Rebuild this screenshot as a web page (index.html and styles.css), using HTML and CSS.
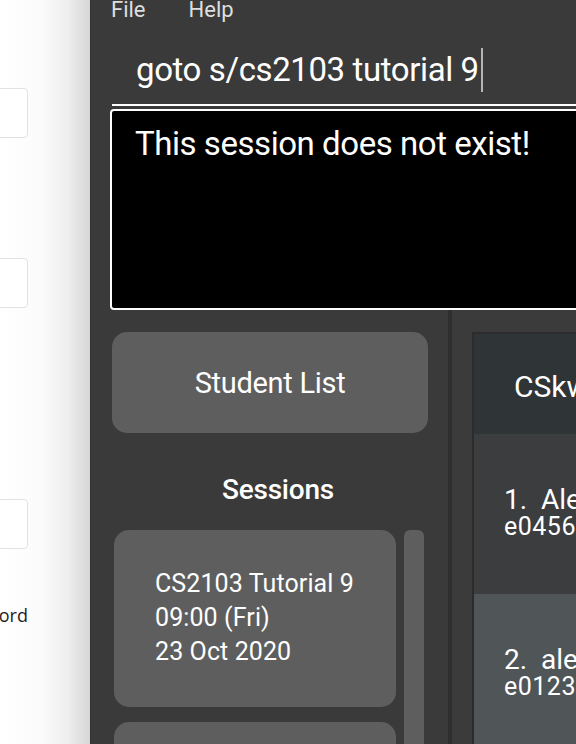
FILE: index.html
```html
<!DOCTYPE html>
<html lang="en">
<head>
<meta charset="utf-8">
<title>CSkwed</title>
<link rel="stylesheet" href="styles.css">
</head>
<body>
<div class="screen">
  <aside class="backdrop">
    <div class="field-col">
      <div class="field-row row-a"><div class="field"></div></div>
      <div class="field-row row-b"><div class="field"></div></div>
      <div class="field-row row-c"><div class="field"></div></div>
      <div class="field-row row-d"><span class="label">Password</span></div>
    </div>
  </aside>
  <main class="app">
    <nav class="menubar">
      <span class="menu-item">File</span>
      <span class="menu-item">Help</span>
    </nav>
    <div class="command">
      <span class="command-text">goto s/cs2103 tutorial 9</span><span class="caret"></span>
    </div>
    <div class="result">This session does not exist!</div>
    <div class="lower">
      <section class="left-pane">
        <button class="student-btn">Student List</button>
        <h2 class="sessions-title">Sessions</h2>
        <div class="session-area">
          <div class="session-list">
            <div class="session-card">
              <div>CS2103 Tutorial 9</div>
              <div>09:00 (Fri)</div>
              <div>23 Oct 2020</div>
            </div>
            <div class="session-card"></div>
          </div>
          <div class="scrollbar"></div>
        </div>
      </section>
      <div class="divider"></div>
      <section class="right-pane">
        <div class="student-card">
          <div class="card-header">CSkwed Students</div>
          <div class="student-item">
            <div class="student-name">1.&nbsp;&nbsp;Alex Yeoh</div>
            <div class="student-id">e0456789</div>
          </div>
          <div class="student-item alt">
            <div class="student-name">2.&nbsp;&nbsp;alex tan</div>
            <div class="student-id">e0123456</div>
          </div>
        </div>
      </section>
    </div>
  </main>
</div>
</body>
</html>
```
FILE: styles.css
```css
* { box-sizing: border-box; }
html, body {
  margin: 0;
  padding: 0;
  width: 576px;
  height: 744px;
  overflow: hidden;
}
body {
  font-family: "Roboto", "Inter", sans-serif;
  background: #3a3a3a;
}
.screen {
  display: flex;
  width: 576px;
  height: 744px;
  overflow: hidden;
}
.backdrop {
  flex: 0 0 90px;
  height: 744px;
  background: linear-gradient(to right, #ffffff 0%, #fbfbfb 45%, #eeeeee 75%, #d6d6d6 100%);
}
.field-col {
  width: 28px;
  overflow: hidden;
  display: flex;
  flex-direction: column;
}
.field-row {
  display: flex;
  justify-content: flex-end;
  width: 28px;
}
.field {
  flex: 0 0 240px;
  height: 50px;
  border: 1px solid #e2e2e2;
  border-radius: 4px;
  background: #fff;
}
.row-a { margin-top: 88px; }
.row-b { margin-top: 120px; }
.row-c { margin-top: 191px; }
.row-d { margin-top: 54px; }
.label {
  flex: 0 0 auto;
  font-family: "Open Sans", sans-serif;
  font-size: 18px;
  line-height: 24px;
  color: #1e1e1e;
  white-space: nowrap;
}
.app {
  flex: 0 0 720px;
  height: 744px;
  background: #3a3a3a;
  display: flex;
  flex-direction: column;
  border-left: 1px solid #333;
}
.menubar {
  display: flex;
  height: 30px;
  padding-left: 20px;
  gap: 43px;
}
.menu-item {
  font-size: 22px;
  line-height: 20px;
  color: #dedede;
}
.command {
  margin-left: 21px;
  padding: 18px 0 12px 24px;
  border-bottom: 2px solid #ffffff;
  display: flex;
  align-items: center;
  height: 76px;
}
.command-text {
  font-size: 33px;
  line-height: 44px;
  letter-spacing: -0.4px;
  color: #ffffff;
  white-space: nowrap;
}
.caret {
  width: 2px;
  height: 44px;
  margin-left: 2px;
  background: #b5b5b5;
}
.result {
  margin: 3px 0 0 19px;
  height: 201px;
  border: 2px solid #ffffff;
  border-radius: 4px;
  background: #000;
  color: #fff;
  font-size: 33px;
  line-height: 40px;
  letter-spacing: -0.45px;
  padding: 13px 0 0 23px;
  white-space: nowrap;
}
.lower {
  flex: 1;
  display: flex;
  min-height: 0;
}
.left-pane {
  flex: 0 0 357px;
  display: flex;
  flex-direction: column;
  padding: 22px 0 0 21px;
}
.student-btn {
  width: 316px;
  height: 101px;
  border: none;
  border-radius: 15px;
  background: #5e5e5e;
  color: #fff;
  font-family: inherit;
  font-size: 29px;
  letter-spacing: -0.3px;
  padding: 0;
}
.sessions-title {
  margin: 40px 0 0;
  padding-left: 16px;
  width: 316px;
  text-align: center;
  font-size: 28px;
  font-weight: 500;
  line-height: 34px;
  letter-spacing: -0.2px;
  color: #fff;
}
.session-area {
  margin-top: 23px;
  display: flex;
  gap: 8px;
  padding-left: 2px;
  flex: 1;
  min-height: 0;
}
.session-list {
  width: 282px;
  display: flex;
  flex-direction: column;
  gap: 15px;
}
.session-card {
  flex: 0 0 177px;
  border-radius: 15px;
  background: #5e5e5e;
  padding: 37px 0 0 41px;
  color: #fff;
  font-size: 25px;
  line-height: 34px;
  letter-spacing: 0.1px;
}
.scrollbar {
  width: 20px;
  height: 300px;
  border-radius: 6px;
  background: #5e5e5e;
}
.divider {
  flex: 0 0 4px;
  background: #2f2f2f;
}
.right-pane {
  flex: 1;
  padding: 22px 0 0 20px;
  background: #3b3b3b;
}
.student-card {
  width: 400px;
  border: 2px solid #2c2c2c;
  border-right: none;
  border-bottom: none;
  height: 500px;
  background: #505558;
}
.card-header {
  height: 100px;
  background: #2f3437;
  color: #fff;
  font-size: 30px;
  line-height: 36px;
  padding: 35px 0 0 40px;
  white-space: nowrap;
}
.student-item {
  height: 160px;
  background: #3b3d3f;
  padding: 50px 0 0 30px;
  color: #fff;
  white-space: nowrap;
}
.student-item.alt { background: #505558; }
.student-name {
  font-size: 28px;
  line-height: 32px;
}
.student-id {
  font-size: 25px;
  line-height: 22px;
  letter-spacing: 0.5px;
}
```
